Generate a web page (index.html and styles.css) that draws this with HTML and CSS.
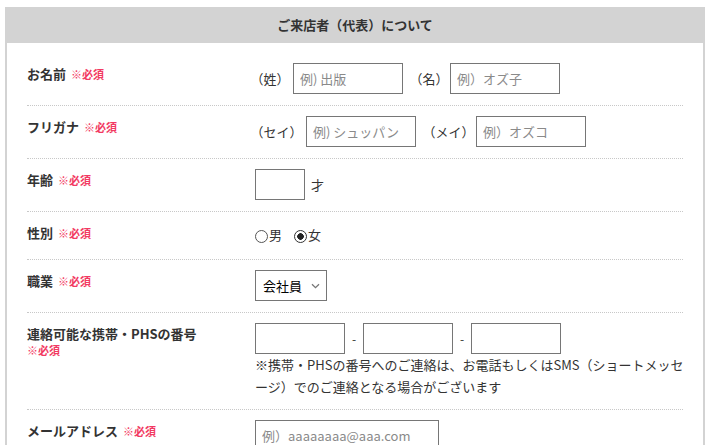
FILE: index.html
```html
<!DOCTYPE html>
<html lang="ja">
<head>
<meta charset="utf-8">
<link rel="stylesheet" href="styles.css">
</head>
<body>
<section class="box">
  <h2 class="box-title">ご来店者（代表）について</h2>
  <div class="rows">
    <div class="row">
      <div class="label">お名前 <span class="req">※必須</span></div>
      <div class="field">
        <span class="pre">（姓）</span><input class="txt w110" type="text" placeholder="例) 出版">
        <span class="pre gap">（名）</span><input class="txt w110" type="text" placeholder="例）オズ子">
      </div>
    </div>
    <div class="row">
      <div class="label">フリガナ <span class="req">※必須</span></div>
      <div class="field">
        <span class="pre">（セイ）</span><input class="txt w110" type="text" placeholder="例) シュッパン">
        <span class="pre gap">（メイ）</span><input class="txt w110" type="text" placeholder="例）オズコ">
      </div>
    </div>
    <div class="row">
      <div class="label">年齢 <span class="req">※必須</span></div>
      <div class="field">
        <input class="txt w50" type="text"><span class="unit">才</span>
      </div>
    </div>
    <div class="row">
      <div class="label">性別 <span class="req">※必須</span></div>
      <div class="field radios">
        <label class="radio"><input type="radio" name="sex">男</label>
        <label class="radio"><input type="radio" name="sex" checked>女</label>
      </div>
    </div>
    <div class="row">
      <div class="label">職業 <span class="req">※必須</span></div>
      <div class="field">
        <select class="sel"><option>会社員</option></select>
      </div>
    </div>
    <div class="row">
      <div class="label">連絡可能な携帯・PHSの番号<br><span class="req">※必須</span></div>
      <div class="field col">
        <div class="tel">
          <input class="txt w90" type="text"><span class="dash">-</span><input class="txt w90" type="text"><span class="dash">-</span><input class="txt w90" type="text">
        </div>
        <p class="note">※携帯・PHSの番号へのご連絡は、お電話もしくはSMS（ショートメッセージ）でのご連絡となる場合がございます</p>
      </div>
    </div>
    <div class="row">
      <div class="label">メールアドレス <span class="req">※必須</span></div>
      <div class="field">
        <input class="txt w184" type="text" placeholder="例）aaaaaaaa@aaa.com">
      </div>
    </div>
  </div>
</section>
</body>
</html>
```
FILE: styles.css
```css
html, body {
  margin: 0;
  padding: 0;
  background: #fff;
}
body {
  font-family: "Noto Sans CJK JP", "Noto Sans", sans-serif;
  font-size: 13px;
  color: #333;
}
.box {
  margin: 7px 0 0 5px;
  width: 700px;
  box-sizing: border-box;
  border: 2px solid #d3d3d3;
  border-bottom: none;
  height: 450px;
  overflow: hidden;
}
.box-title {
  margin: 0;
  background: #d3d3d3;
  height: 34px;
  line-height: 32px;
  text-align: center;
  font-size: 13px;
  font-weight: bold;
  color: #333;
}
.rows {
  padding: 10px 20px 0 20px;
}
.row {
  display: grid;
  grid-template-columns: 228px 1fr;
  padding: 10px 0 11px;
  border-bottom: 1px dotted #c8c8c8;
}
.label {
  font-weight: bold;
  font-size: 13px;
  line-height: 16px;
  padding-top: 3px;
  color: #333;
}
.req {
  color: #f23a62;
  font-size: 11px;
  margin-left: 2px;
}
.label br + .req {
  margin-left: 0;
}
.field {
  display: flex;
  align-items: center;
  min-height: 26px;
}
.field.col {
  flex-direction: column;
  align-items: flex-start;
}
.pre {
  margin-left: 2px;
  margin-right: 10px;
  font-feature-settings: "halt";
  color: #333;
}
.pre.gap {
  margin-left: 13px;
  margin-right: 8px;
}
.txt {
  box-sizing: border-box;
  height: 31px;
  border: 1px solid #767676;
  border-radius: 0;
  padding: 0 6px;
  font-family: "Noto Sans CJK JP", "Noto Sans", sans-serif;
  font-size: 13px;
  color: #333;
  background: #fff;
  margin: 0;
}
.txt::placeholder {
  color: #8a8a8a;
}
.w110 { width: 110px; }
.w50 { width: 50px; }
.w90 { width: 90px; }
.w184 { width: 184px; }
.unit {
  margin-left: 6px;
  font-size: 13px;
}
.radios {
  gap: 12px;
}
.radio {
  display: inline-flex;
  align-items: center;
  line-height: 26px;
  color: #333;
}
.radio input {
  appearance: none;
  -webkit-appearance: none;
  box-sizing: border-box;
  margin: 0 1px 0 0;
  width: 13px;
  height: 13px;
  border: 1px solid #555;
  border-radius: 50%;
  background: #fff;
  position: relative;
  top: 1px;
}
.radio input:checked {
  border-color: #333;
  background: radial-gradient(circle, #222 0 3px, #fff 3.6px);
}
.sel {
  appearance: none;
  -webkit-appearance: none;
  box-sizing: border-box;
  height: 31px;
  width: 72px;
  border: 1px solid #767676;
  border-radius: 0;
  font-family: "Noto Sans CJK JP", "Noto Sans", sans-serif;
  font-size: 13px;
  color: #000;
  background: #fff url("data:image/svg+xml;utf8,<svg xmlns='http://www.w3.org/2000/svg' width='9' height='6' viewBox='0 0 9 6'><path d='M1 1.2 L4.5 4.6 L8 1.2' fill='none' stroke='%23777' stroke-width='1.3'/></svg>") no-repeat right 6px center;
  padding: 0 0 0 7px;
  margin: 0;
}
.tel {
  display: flex;
  align-items: center;
}
.dash {
  width: 18px;
  text-align: center;
  font-size: 12px;
}
.note {
  margin: 0 -10px 0 0;
  line-height: 22px;
  font-size: 13px;
  color: #333;
}
```
